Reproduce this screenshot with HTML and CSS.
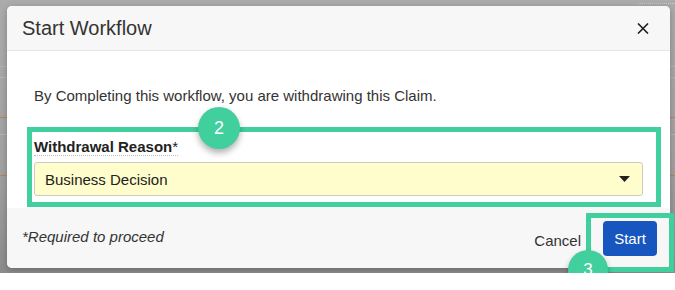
FILE: index.html
```html
<!DOCTYPE html>
<html>
<head>
<meta charset="utf-8">
<link rel="stylesheet" href="styles.css">
</head>
<body>
<div class="backdrop">
  <div class="bg-line l1"></div>
  <div class="bg-line l2"></div>
  <div class="bg-line l3 orange"></div>
  <div class="bg-line l4"></div>
  <div class="bg-line l5 orange"></div>
  <div class="bg-dots"></div>
  <div class="modal">
    <div class="modal-header">
      <h1 class="modal-title">Start Workflow</h1>
      <svg class="close" width="12" height="11" viewBox="0 0 12 11"><path d="M1 0.5 L11 10.5 M11 0.5 L1 10.5" stroke="#1e1e1e" stroke-width="1.6" fill="none"/></svg>
    </div>
    <div class="modal-body">
      <p class="intro">By Completing this workflow, you are withdrawing this Claim.</p>
      <label class="field-label">Withdrawal Reason<span class="req">*</span></label>
      <div class="select">
        <span>Business Decision</span>
        <svg class="caret" width="11" height="6" viewBox="0 0 11 6"><path d="M0 0 H11 L5.5 6 Z" fill="#222"/></svg>
      </div>
    </div>
    <div class="modal-footer">
      <span class="required">*Required to proceed</span>
      <span class="cancel">Cancel</span>
      <button class="start">Start</button>
    </div>
  </div>
  <div class="hl hl-field"></div>
  <div class="hl hl-start"></div>
  <div class="badge badge-2">2</div>
  <div class="badge badge-3">3</div>
</div>
</body>
</html>
```
FILE: styles.css
```css
html, body {
  margin: 0;
  padding: 0;
  background: #ffffff;
  font-family: "Liberation Sans", Arial, sans-serif;
}
.backdrop {
  position: relative;
  width: 675px;
  height: 273px;
  box-sizing: border-box;
  padding: 6px 0 0 7px;
  background: linear-gradient(180deg, #ababab 0%, #a2a2a2 60%, #8c8c8c 100%);
}
.bg-line {
  position: absolute;
  left: 0;
  right: 0;
  height: 1px;
  background: #b4b4b4;
}
.bg-line.orange { background: #b8874a; }
.l1 { top: 66px; }
.l2 { top: 77px; }
.l3 { top: 117px; }
.l4 { top: 134px; }
.l5 { top: 175px; }
.bg-dots {
  position: absolute;
  top: 3px;
  left: 638px;
  right: 0;
  border-top: 1px dotted #c8c8c8;
}
.modal {
  position: relative;
  width: 663px;
  height: 262px;
  border-radius: 5px;
  overflow: hidden;
  display: flex;
  flex-direction: column;
  background: #fff;
  box-shadow: 0 2px 6px rgba(0,0,0,0.25);
}
.modal-header {
  height: 44px;
  flex: none;
  background: #f7f7f7;
  border-bottom: 1px solid #e6e6e6;
  display: flex;
  align-items: center;
  justify-content: space-between;
  padding: 0 21px 0 15px;
}
.modal-title {
  margin: 0;
  font-size: 20px;
  font-weight: normal;
  color: #333;
  line-height: 24px;
}
.close { display: block; margin-top: 1px; }
.modal-body {
  height: 157px;
  flex: none;
  box-sizing: border-box;
  padding: 36px 27px 0 27px;
}
.intro {
  margin: 0;
  font-size: 15px;
  line-height: 18px;
  color: #333;
}
.field-label {
  display: inline-block;
  margin-top: 33px;
  font-size: 15px;
  font-weight: bold;
  line-height: 17px;
  color: #222;
  border-bottom: 1px dotted #bdbdbd;
}
.req { font-weight: normal; }
.select {
  margin-top: 6px;
  width: 609px;
  height: 34px;
  box-sizing: border-box;
  background: #fffdcc;
  border: 1px solid #cbcbc0;
  border-radius: 3px;
  display: flex;
  align-items: center;
  justify-content: space-between;
  padding: 0 12px 0 10px;
  font-size: 15px;
  color: #222;
}
.caret { display: block; }
.modal-footer {
  flex: 1;
  background: #f7f7f7;
  display: flex;
  align-items: center;
  padding: 0 13px 0 15px;
}
.required {
  font-style: italic;
  font-size: 15px;
  color: #333;
  flex: 1;
  margin-top: -3px;
}
.cancel {
  font-size: 15px;
  color: #333;
  margin-right: 22px;
  margin-top: 5px;
}
.start {
  width: 54px;
  height: 35px;
  border: none;
  border-radius: 4px;
  background: #1756be;
  color: #fff;
  font-family: "Liberation Sans", Arial, sans-serif;
  font-size: 15px;
  padding: 0;
}
.hl {
  position: absolute;
  box-sizing: border-box;
  border: 5px solid #40cf9d;
}
.hl-field {
  left: 27px;
  top: 127px;
  width: 634px;
  height: 80px;
}
.hl-start {
  left: 586px;
  top: 213px;
  width: 88px;
  height: 59px;
}
.badge {
  position: absolute;
  border-radius: 50%;
  background: #40cf9d;
  color: #fff;
  display: flex;
  align-items: center;
  justify-content: center;
  box-shadow: 0 4px 6px rgba(0,0,0,0.3);
}
.badge-2 {
  left: 198px;
  top: 107px;
  width: 42px;
  height: 42px;
  font-size: 18px;
}
.badge-3 {
  left: 568px;
  top: 250px;
  width: 40px;
  height: 40px;
  font-size: 17px;
}
```
